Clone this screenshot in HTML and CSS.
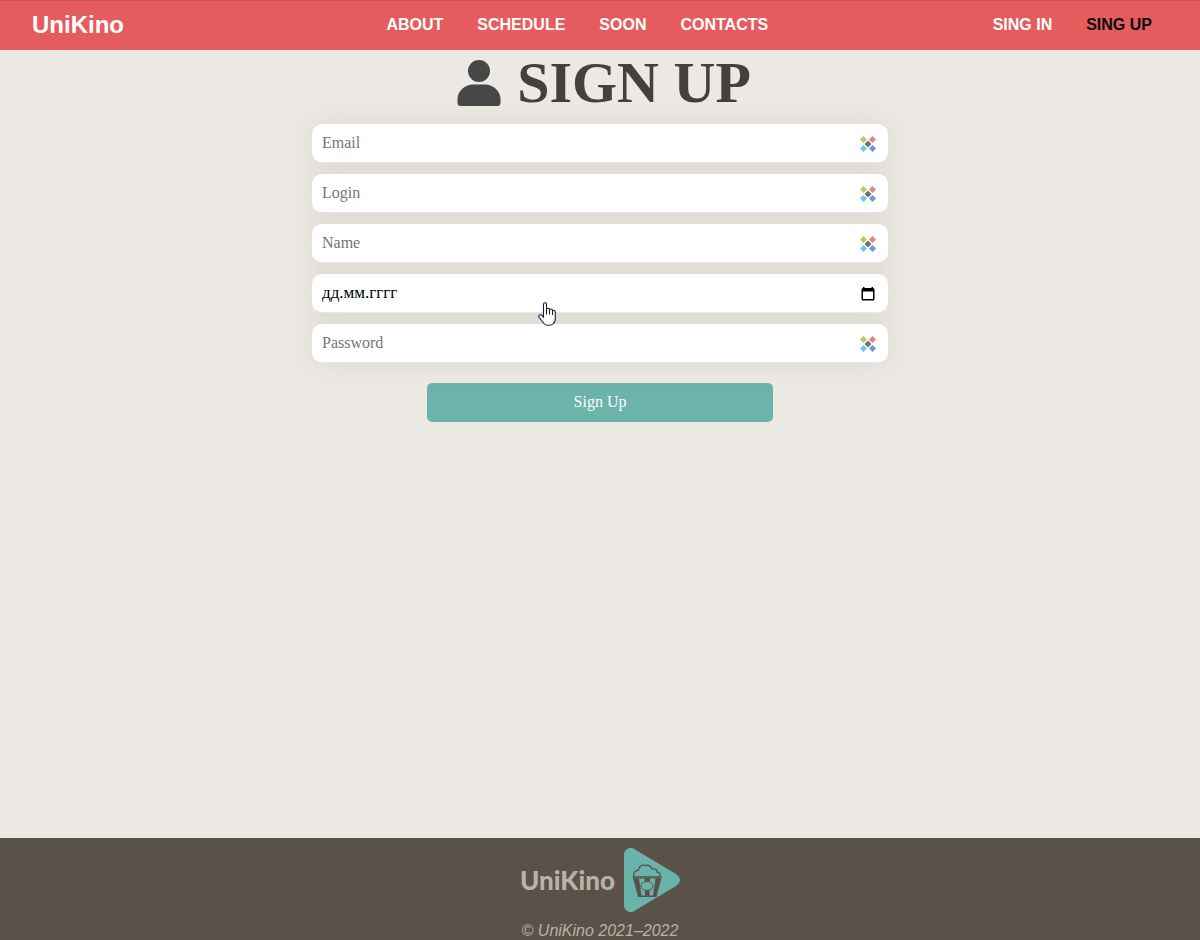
FILE: index.html
```html
<!DOCTYPE html>
<html lang="en">
<head>
<meta charset="utf-8">
<meta name="viewport" content="width=device-width, initial-scale=1">
<title>UniKino – Sign Up</title>
<link rel="stylesheet" href="styles.css">
</head>
<body>
<svg class="sprite" aria-hidden="true">
  <symbol id="dots" viewBox="0 0 16 16">
    <path fill="#a5d260" d="M3.500 0 7 3.500 3.500 7 0 3.500z"/>
    <path fill="#ef7f80" d="M12.500 0 16 3.500 12.500 7 9 3.500z"/>
    <path fill="#6dc8f1" d="M3.500 9 7 12.500 3.500 16 0 12.500z"/>
    <path fill="#6e97d8" d="M12.500 9 16 12.500 12.500 16 9 12.500z"/>
    <path fill="#707070" d="M8 4.500 11.500 8 8 11.500 4.500 8z"/>
  </symbol>
</svg>
<header class="header">
  <a class="brand" href="#">UniKino</a>
  <nav class="nav" aria-label="Main">
    <a class="link" href="#">ABOUT</a>
    <a class="link" href="#">SCHEDULE</a>
    <a class="link" href="#">SOON</a>
    <a class="link" href="#">CONTACTS</a>
  </nav>
  <nav class="auth" aria-label="Account">
    <a class="link" href="#">SING IN</a>
    <a class="link link-active" href="#" aria-current="page">SING UP</a>
  </nav>
</header>
<main class="main">
  <h1 class="title">
    <svg class="user-icon" viewBox="0 0 44 46" aria-hidden="true"><circle cx="22" cy="11" r="11"/><path d="M.5 42.500V39C.5 31 8 24.500 16 24.500H28C36 24.500 43.500 31 43.500 39V42.500Q43.500 46 40 46H4Q.5 46 .5 42.500z"/></svg>
    <span>SIGN UP</span>
  </h1>
  <form class="form">
    <div class="field">
      <input class="control" type="email" placeholder="Email" aria-label="Email">
      <svg class="mark" aria-hidden="true"><use href="#dots"/></svg>
    </div>
    <div class="field">
      <input class="control" type="text" placeholder="Login" aria-label="Login">
      <svg class="mark" aria-hidden="true"><use href="#dots"/></svg>
    </div>
    <div class="field">
      <input class="control" type="text" placeholder="Name" aria-label="Name">
      <svg class="mark" aria-hidden="true"><use href="#dots"/></svg>
    </div>
    <div class="field">
      <input class="control control-date" type="text" placeholder="дд.мм.гггг" aria-label="Date of birth">
      <button class="mark picker" type="button" aria-label="Open calendar">
        <svg class="picker-icon" viewBox="0 0 16 16" aria-hidden="true"><path fill-rule="evenodd" d="M3 1H4.500V2H11.500V1H13V2Q14.500 2 14.500 3.500V13Q14.500 14.500 13 14.500H3Q1.500 14.500 1.500 13V3.500Q1.500 2 3 2zM3 5.500V13H13V5.500z"/></svg>
      </button>
      <svg class="pointer" viewBox="0 0 18 24" aria-hidden="true"><path d="M5.500 14V2.500Q5.500 .7 7 .7T8.500 2.500V7.500Q8.500 6.200 10 6.200T11.500 7.500V8.200Q11.500 7 13 7T14.500 8.300V9.300Q14.500 8.300 15.800 8.300T17.300 9.800V17Q17.300 20 15.500 21.500 14 23.300 11.500 23.300H9.500Q7.500 23.300 6 21.500L1.200 15.500Q.3 14 1.500 13.100 2.700 12.400 4 13.300L5.500 15zM8.500 7.500V12.500M11.500 8V12.500M14.500 9V13"/></svg>
    </div>
    <div class="field">
      <input class="control" type="password" placeholder="Password" aria-label="Password">
      <svg class="mark" aria-hidden="true"><use href="#dots"/></svg>
    </div>
    <button class="submit" type="submit">Sign Up</button>
  </form>
</main>
<footer class="footer">
  <a class="footer-brand" href="#">
    <span>UniKino</span>
    <svg class="play" viewBox="0 0 56 64" aria-hidden="true">
      <path fill="#6ab3ab" d="M0 7C0 1 6-2 11 1.500L52 26Q60 32 52 38L11 62.500C6 66 0 63 0 57z"/>
      <path fill="none" stroke="#5a5248" stroke-width="1.300" stroke-linejoin="round" d="M10 28C9 25 11 22.500 14.500 22 15 18 18 16.500 21 17.500 25 16.500 27 19 28 21 32 20.500 33 22 33 24 36 24.500 36.500 26 36 28"/>
      <path fill="#5a5248" d="M8.500 28H38L32.500 49H14z"/>
      <path fill="#6ab3ab" d="M15 30.500H20.500L21 47.500H17.500zM26 30.500H31.500L29 47.500H25.500z"/>
      <ellipse cx="23" cy="38" rx="6" ry="4.500" fill="#6ab3ab" stroke="#5a5248"/>
      <path fill="none" stroke="#6ab3ab" stroke-width=".7" d="M10 29H36.500" stroke-dasharray="1.500 1"/>
    </svg>
  </a>
  <p class="copyright">© UniKino 2021–2022</p>
</footer>
</body>
</html>
```
FILE: styles.css
```css
* {
  box-sizing: border-box;
}

body {
  display: flex;
  flex-direction: column;
  min-height: 100vh;
  margin: 0;
  background: #ece8e3;
  font-family: "Liberation Serif", "Times New Roman", serif;
  font-size: 16px;
}

.sprite {
  display: none;
}

.header {
  display: flex;
  align-items: center;
  justify-content: space-between;
  padding: 10px 48px 11px 32px;
  border-top: 1px solid #cf5357;
  background: #e65c5e;
  font-family: "Liberation Sans", Arial, sans-serif;
  font-weight: 700;
}

.brand {
  color: #fff;
  font-size: 24px;
  line-height: 28px;
  text-decoration: none;
}

.nav,
.auth {
  display: flex;
  gap: 34px;
}

.nav {
  margin-left: 38px;
}

.link {
  color: #fff;
  line-height: 28px;
  text-decoration: none;
}

.link-active {
  color: #0a0a0a;
}

.main {
  flex: 1;
}

.title {
  display: flex;
  align-items: center;
  justify-content: center;
  gap: 16px;
  margin: 0;
  padding: 0 0 8px 8px;
  color: #46403b;
  font-size: 58px;
  line-height: 66px;
}

.user-icon {
  width: 44px;
  height: 46px;
  fill: #474747;
}

.form {
  display: flex;
  flex-direction: column;
  gap: 11px;
  width: 48%;
  margin: 0 auto;
}

.field {
  position: relative;
  border-radius: 10px;
  box-shadow: 0 0 24px rgba(140, 145, 110, 0.17);
}

.control {
  position: relative;
  z-index: 1;
  display: block;
  width: 100%;
  padding: 10px 40px 10px 10px;
  border: 0;
  border-bottom: 1px solid #e6e6ea;
  border-radius: 10px;
  background: #fff;
  color: #000;
  font: inherit;
  line-height: 18px;
}

.control::placeholder {
  color: #757575;
}

.control-date {
  font-size: 17px;
}

.control-date::placeholder {
  color: #000;
}

.mark {
  position: absolute;
  z-index: 2;
  top: 12px;
  right: 12px;
  width: 16px;
  height: 16px;
}

.picker {
  padding: 0;
  border: 0;
  background: none;
}

.picker-icon {
  display: block;
}

.pointer {
  position: absolute;
  z-index: 3;
  top: 28px;
  left: 226px;
  width: 18px;
  height: 24px;
  fill: #fff;
  stroke: #1c1c28;
  stroke-width: 1.1;
}

.submit {
  width: 60%;
  margin: 9px auto 0;
  padding: 9px 10px 11px;
  border: 0;
  border-radius: 5px;
  background: #6bb3ab;
  color: #fff;
  font: inherit;
  line-height: 19px;
}

.footer {
  display: flex;
  flex-direction: column;
  align-items: center;
  padding-top: 10px;
  background: #5a5248;
  color: #b9b2a6;
}

.footer-brand {
  display: flex;
  align-items: center;
  gap: 9px;
  color: inherit;
  font-family: Lato, sans-serif;
  font-size: 26px;
  font-weight: 900;
  text-decoration: none;
}

.play {
  width: 56px;
  height: 64px;
}

.copyright {
  margin: 10px 0 0;
  font-family: "Liberation Sans", Arial, sans-serif;
  font-style: italic;
  line-height: 18px;
}
```
